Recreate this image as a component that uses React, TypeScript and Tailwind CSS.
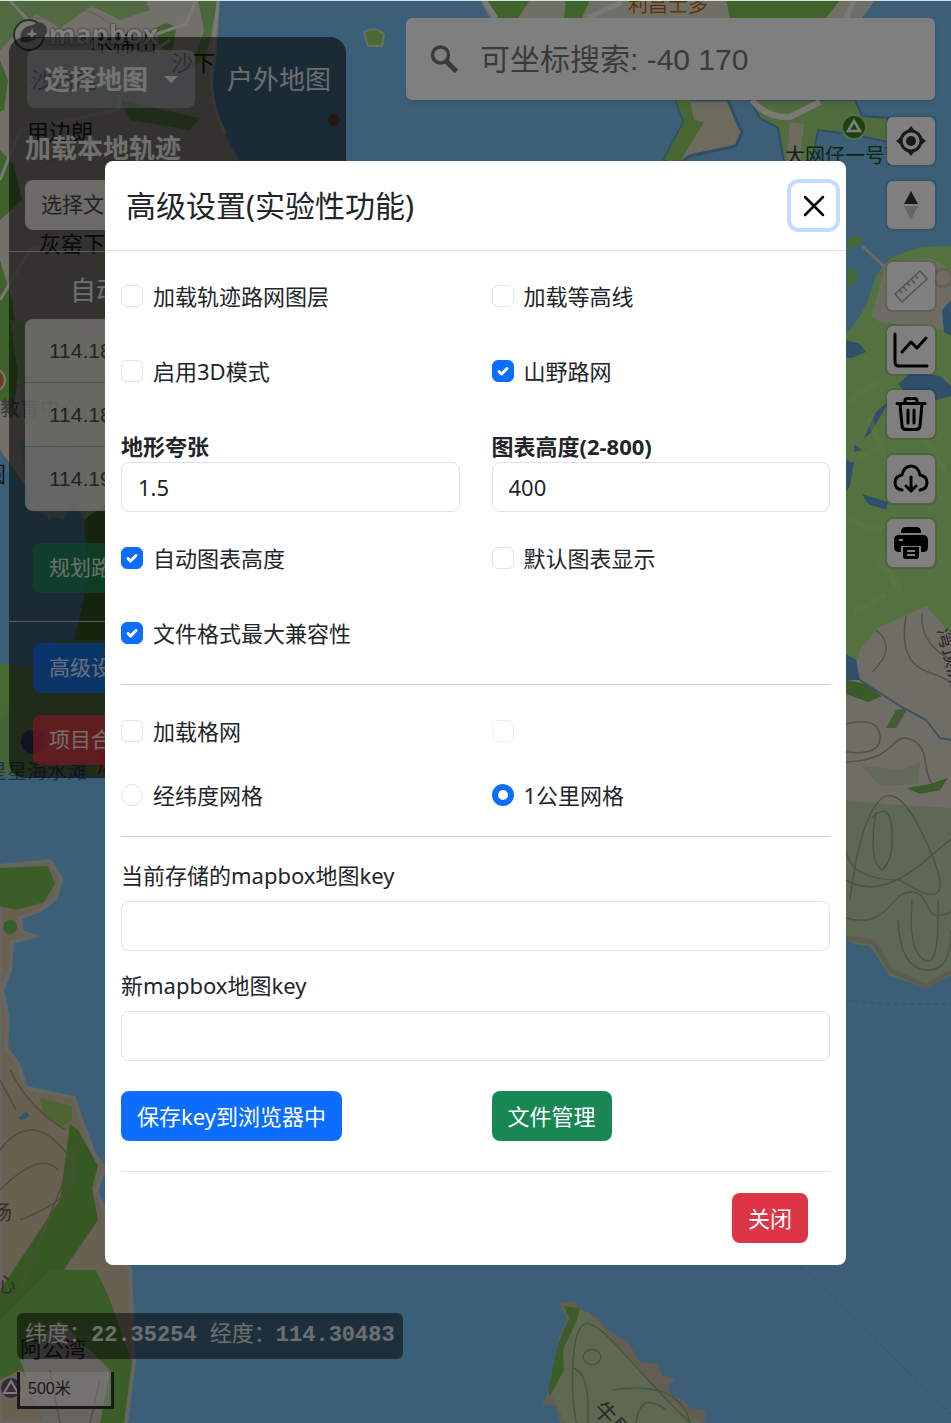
import React, { useState } from "react";

const sans = "font-['Noto_Sans','Noto_Sans_CJK_SC',sans-serif]";

interface CheckProps { id: string; label: string; defaultChecked?: boolean; disabled?: boolean }

const Check: React.FC<CheckProps> = ({ id, label, defaultChecked, disabled }) => (
    <div className="flex h-8 items-center gap-2.5">
        <span className="grid size-[22px] shrink-0 place-items-center">
            <input id={id} type="checkbox" aria-label={label || "备用选项"} defaultChecked={defaultChecked} disabled={disabled} className="peer col-start-1 row-start-1 size-[22px] appearance-none rounded-md border border-[#dee2e6] bg-white checked:border-[#0d6efd] checked:bg-[#0d6efd] disabled:opacity-50" />
            <svg viewBox="0 0 22 22" className="pointer-events-none col-start-1 row-start-1 hidden size-[22px] peer-checked:block" fill="none" stroke="#fff" strokeWidth="3" strokeLinecap="round" strokeLinejoin="round"><path d="m7 11.500 2.500 2.500L15 8.500" /></svg>
        </span>
        {label && <label htmlFor={id}>{label}</label>}
    </div>
);

interface RadioProps { id: string; label: string; checked: boolean; onChange: () => void }

const Radio: React.FC<RadioProps> = ({ id, label, checked, onChange }) => (
    <div className="flex h-8 items-center gap-2.5">
        <input id={id} type="radio" name="grid" checked={checked} onChange={onChange} className="size-[22px] shrink-0 appearance-none rounded-full border border-[#dee2e6] bg-white checked:border-[6px] checked:border-[#0d6efd]" />
        <label htmlFor={id}>{label}</label>
    </div>
);

const inputClass = "block h-[50px] w-full rounded-lg border border-[#dee2e6] bg-white px-4 text-[22px] text-[#212529]";

const MapCanvas: React.FC = () => (
    <svg aria-hidden="true" viewBox="0 0 951 1423" preserveAspectRatio="xMidYMid slice" className="absolute inset-0 h-full w-full bg-[#78bef0]">
        <rect width="951" height="1423" fill="#78bef0" />

        {/* north-west shore */}
        <path d="M0 0H220L216 60Q208 100 222 130L250 180L190 250L160 330L70 430L50 520L0 450Z" fill="#e6e0d2" />
        <path d="M0 0H146L150 10L120 20L92 6L60 28L36 14L0 50Z" fill="#a5d582" />
        <path d="M198 0H218L206 58L192 68L204 30Z" fill="#9bcf78" />
        <path d="M156 28Q170 18 176 30L172 52L160 48Z" fill="#84c25f" />
        <path d="M0 60L8 80L4 110L0 112ZM0 150L14 165L22 200L0 220ZM0 260L12 300L20 360L12 420L0 400Z" fill="#7fc456" />
        <path d="M120 100L200 118L190 130L130 120Z" fill="#8cc66a" />
        <path d="M10 320L110 340V560L60 480L25 420Z" fill="#c3e8ab" />
        <path d="M20 440L90 450L64 520L30 510Z" fill="#b9d5df" />
        <path d="M84 520L110 500V660H90L74 640L88 580Z" fill="#63a33e" />
        <path d="M60 640H190V775H0V664L30 668Z" fill="#8cc66a" />
        <path d="M0 664L10 664V706L0 720Z" fill="#8fd464" />
        <path d="M10 0L40 34L110 50L186 24L196 0M0 180L20 130L118 110L126 70L170 40M0 300L30 250L110 230" fill="none" stroke="#f6f3ea" strokeWidth="3" />
        <path d="M12 0Q30 28 60 14T120 34M20 90Q60 60 100 84T170 90M40 170Q80 130 140 170" fill="none" stroke="#c3beae" strokeWidth="1" />
        <path d="M218 0L212 60Q208 104 226 134" fill="none" stroke="#f7f5ee" strokeWidth="3" />
        <path d="M364 32Q374 26 384 34L382 46L368 46Z" fill="#95d367" stroke="#d4e3b5" strokeWidth="2" />
        <circle cx="334" cy="120" r="6" fill="#b0664d" />

        {/* north coast */}
        <path d="M480 0H875L862 18H490Z" fill="#e2decb" />
        <path d="M486 0H530L518 18H498ZM566 0H590L582 18H564ZM726 0H840L826 18H730Z" fill="#7cc852" />
        <path d="M484 0L496 18M588 18L622 2M854 0L846 18" fill="none" stroke="#f7f5ee" strokeWidth="5" />
        <path d="M676 100H728Q736 120 742 132L736 146L690 156L676 166L664 160L684 122Z" fill="#dcd5ba" stroke="#5e9dca" strokeWidth="3" />
        <path d="M676 100H690L694 120L704 122L680 162L664 160L684 122Z" fill="#92cf66" />
        <path d="M750 100H855L862 116L888 118V142L850 134L818 130L812 162H784L778 128L760 118Z" fill="#a1d779" stroke="#5e9dca" strokeWidth="2" />
        <path d="M790 122L804 124L800 162H786Z" fill="#dcd5ba" />
        <path d="M752 100Q766 118 790 117L820 102" fill="none" stroke="#f5f3ec" strokeWidth="6" />

        {/* east land */}
        <path d="M846 334L856 322L866 306L876 276L890 258L920 247L951 246V990L912 986L888 976L866 948L846 940Z" fill="#a9e47f" />
        <path d="M872 316L886 262L930 258L951 270V330L880 322Z" fill="#ded8c8" />
        <circle cx="943" cy="278" r="9" fill="none" stroke="#c5c0b3" strokeWidth="3" />
        <path d="M848 238L860 236L862 244L848 248ZM848 270H858L854 284L848 286Z" fill="#8fcf62" />
        <path d="M862 246L890 272L876 318" fill="none" stroke="#d9d6c2" strokeWidth="3" />
        <path d="M846 340L860 344L866 352L852 358H846ZM898 384L912 372L940 376L951 386V396L936 400L906 394ZM890 400L870 434L864 438L876 412ZM854 444L862 450L854 452ZM846 460L854 462L850 486L846 492ZM862 494L888 502L886 510L868 504ZM942 310L951 300V336L944 332Z" fill="#5f9fd4" />
        <path d="M850 400L876 384M852 460L880 448M870 420L890 470M846 520L880 530M920 430L944 470M880 560L900 590M856 612L884 596" fill="none" stroke="#bcea93" strokeWidth="6" strokeLinecap="round" opacity=".5" />
        <path d="M860 650L878 628L926 606L951 634V810H846V700Z" fill="#e0dacd" />
        <path d="M846 654L856 660L860 680H846Z" fill="#5f9fd4" />
        <path d="M846 680L866 684L882 696L868 702L846 694Z" fill="#74b550" />
        <path d="M886 728L896 710L908 708L896 728Z" fill="#87b96c" />
        <path d="M862 766L900 770L920 762L918 784L880 786Z" fill="#c4d3b4" />
        <path d="M846 800L880 804L920 806L951 808V980L930 982L890 966L846 930Z" fill="#bcd0aa" />
        <path d="M906 788L930 784L948 778L940 790L920 794Z" fill="#73ba4c" />
        <path d="M846 944L870 946L890 976L926 988L951 976V1060H846Z" fill="#78bef0" />
        <path d="M846 938L874 942L890 970L926 986L951 972" fill="none" stroke="#bfb5ad" strokeWidth="5" />
        <path d="M860 680L900 706L926 720L940 738L951 740" fill="none" stroke="#7e9fcc" strokeWidth="2" />
        <path d="M876 630Q898 648 872 672M906 616Q898 662 928 672T951 690M922 614Q920 644 951 660M846 724Q878 716 880 736T846 752M846 762C900 760 890 730 912 740S918 780 940 790M850 900Q860 820 880 800T930 850T900 880Q850 880 846 850M872 818Q890 800 892 830T882 870Q868 860 876 812M846 918C890 930 890 890 912 892S920 926 951 912M912 900Q908 950 924 960T938 900M846 880Q880 900 926 860T951 846M898 920Q900 968 926 970T951 930" fill="none" stroke="#a39f8c" strokeWidth="1.500" />
        <path d="M846 1000Q890 1006 951 1004M800 1266L951 1414" fill="none" stroke="#6ba7d4" strokeWidth="1" strokeDasharray="5 3" />

        {/* south-west shore */}
        <path d="M0 866L50 861L61 878L56 898L40 910L20 918L22 932L34 936L12 942L10 970L2 990L8 1020L6 1048L18 1064L26 1088L74 1098L82 1122L94 1154L104 1168L96 1192L106 1212L108 1232L130 1270L134 1362L126 1423H0Z" fill="#d0c2a4" stroke="#cfcac1" strokeWidth="4" />
        <path d="M0 868L48 866L55 884L44 902L16 910L0 906ZM10 920a7 7 0 1 0 .1 0Z" fill="#72bd50" />
        <path d="M40 1098L72 1106L72 1120L60 1128L42 1112Z" fill="#9bcb6a" />
        <path d="M18 1118L26 1112L30 1116L22 1120Z" fill="#6aabdf" />
        <path d="M70 1124L78 1130L98 1166L92 1188L98 1220L50 1290L0 1324V1290L60 1200Z" fill="#6db248" />
        <path d="M0 1320L50 1270L96 1270L110 1300L132 1362L124 1423H60L20 1370L0 1380Z" fill="#77ba50" />
        <path d="M20 1360L60 1320L110 1370L100 1423H44Z" fill="#cfcabf" />
        <path d="M10 1070Q30 1110 66 1130M0 1150Q30 1110 64 1150T20 1220M0 1190Q40 1150 58 1170M80 1140L20 1290M60 1423L50 1370M90 1423L100 1380M0 1080L16 1110" fill="none" stroke="#a2967c" strokeWidth="1.500" />

        {/* island */}
        <path d="M558 1303L574 1301L578 1308L598 1318L608 1330L628 1342L640 1362L658 1364L662 1376L676 1378L668 1386L672 1396L684 1400L690 1408L706 1411L704 1423H560L556 1406L542 1404L548 1394L558 1342L567 1318Z" fill="#c8baa9" />
        <path d="M564 1308L588 1312L632 1360L660 1394L700 1423H566L550 1392L562 1340L570 1318Z" fill="#bfd0a0" />
        <path d="M564 1306L580 1308L577 1320L563 1350L564 1370L550 1396L548 1390L558 1344L569 1318Z" fill="#7bb956" />
        <path d="M576 1423Q570 1380 574 1350T590 1324T630 1360T690 1423M584 1360a8 7 0 1 0 16-6a8 7 0 1 0-16 6M572 1368Q590 1370 588 1423M612 1390Q680 1380 690 1423M636 1423Q640 1390 666 1410" fill="none" stroke="#98a683" strokeWidth="1.500" />

        <g fill="#2b2b2b" className="font-['Noto_Sans_CJK_SC',sans-serif]" fontSize="22">
            <text x="91" y="51">木棉山</text>
            <text x="171" y="71">沙下</text>
            <text x="31" y="88">沙角尾</text>
            <text x="27" y="140">甲边朗</text>
            <text x="39" y="252">灰窑下</text>
            <text x="0" y="416" fontSize="20" fill="#7e7080">教育中心</text>
            <text x="-16" y="482">圆</text>
            <text x="-13" y="779" fontSize="20" fill="#3e6289">星星海水滩</text>
            <text x="97" y="772" fill="#cf1830">风</text>
            <text x="785" y="163" fontSize="20" fill="#244b22">大网仔一号营地</text>
            <text x="628" y="12" fontSize="20" fill="#bb671c">利昌士多</text>
            <text x="-8" y="1220" fontSize="20" fill="#665e50">场</text>
            <text x="-4" y="1292" fontSize="20" fill="#665e50">心</text>
            <text x="20" y="1357">阿公湾</text>
            <text x="592" y="1410" transform="rotate(48 592 1410)" fill="#555">牛尾洲</text>
            <text x="937" y="630" transform="rotate(75 937 630)" fontSize="20" fill="#555">湾顶洲</text>
        </g>
        <circle cx="-6" cy="380" r="11" fill="#d77843" stroke="#eee" strokeWidth="2" />
        <circle cx="33" cy="742" r="12" fill="#3e5c98" />
        <circle cx="854" cy="127" r="12" fill="#33861b" stroke="#b5d894" strokeWidth="2" />
        <path d="M848 131L854 121L860 131Z" fill="none" stroke="#fff" strokeWidth="2.500" />
        <circle cx="11" cy="1388" r="11" fill="#70576f" stroke="#cfc4cc" strokeWidth="2" />
        <path d="M4 1393L11 1381L18 1393Z" fill="none" stroke="#fff" strokeWidth="2" />

        {/* wordmark */}
        <circle cx="29" cy="35" r="15" fill="#eee" stroke="#5d5d55" strokeWidth="2" />
        <path d="M21 42Q18 27 33 25A8 8 0 1 1 37 38Q31 43 21 42Z" fill="#777" />
        <path d="m32 28 1.500 4.500L38 34l-4.500 1.500L32 40l-1.500-4.500L26 34l4.500-1.500Z" fill="#eee" />
        <text x="49" y="44" fill="#fff" fontSize="27" fontWeight="700" className="font-['Open_Sans',sans-serif] drop-shadow-[0_0_1px_#333]">mapbox</text>
    </svg>
);

const SidePanel: React.FC = () => (
    <aside className="relative mt-[37px] w-[337px] rounded-2xl bg-black/55 pb-[13px] text-[21px] text-white/80">
        <div className="flex items-center gap-8 pt-[13px] pl-[18px] text-[26px] whitespace-nowrap">
            <button type="button" className="flex h-[58px] shrink-0 items-center gap-4 rounded-lg bg-[#b0bac4]/45 px-[17px] font-bold">
                选择地图
                <span className="border-x-[7px] border-t-[7px] border-x-transparent border-t-white/80" />
            </button>
            <span>户外地图</span>
        </div>
        <h2 className="mt-5 px-4 text-[26px] leading-10 font-bold">加载本地轨迹</h2>
        <button type="button" className="mx-4 mt-3 flex h-[50px] w-[305px] items-center rounded-lg bg-[#f5f3ee]/80 px-4 text-[#444]">选择文件</button>
        <hr className="mt-[21px] border-[#bbb]" />
        <h2 className="mt-[18px] pl-[61px] text-[26px] leading-10">自动</h2>
        <ul className="mx-4 mt-[9px] divide-y divide-[#a5aca0] rounded-lg bg-[#f5f3ee]/75 text-[#444]">
            {["114.18", "114.18", "114.19"].map((value, i) => (
                <li key={i} className="flex h-16 items-center px-6 font-['Liberation_Sans','Noto_Sans_CJK_SC',sans-serif]">{value}</li>
            ))}
        </ul>
        <div className="px-6 pt-[32px]">
            <button type="button" className="h-[50px] rounded-lg bg-[#198754]/80 px-4">规划路线</button>
        </div>
        <hr className="mt-[28px] border-[#bbb]" />
        <div className="flex flex-col items-start gap-[22px] px-6 pt-[21px]">
            <button type="button" className="h-[50px] rounded-lg bg-[#0d6efd]/80 px-4">高级设置</button>
            <button type="button" className="h-[50px] rounded-lg bg-[#dc3545]/80 px-4">项目合集</button>
        </div>
    </aside>
);

const tools: { label: string; className: string; icon: React.ReactNode }[] = [
    {
        label: "定位", className: "",
        icon: (
            <svg viewBox="0 0 32 32" className="size-8" fill="none" stroke="#333" strokeWidth="3">
                <circle cx="16" cy="16" r="10" /><circle cx="16" cy="16" r="5" fill="#333" stroke="none" />
                <path d="m16 1 4 5h-8ZM16 31l4-5h-8ZM1 16l5-4v8ZM31 16l-5-4v8Z" fill="#333" stroke="none" />
            </svg>
        ),
    },
    {
        label: "指北", className: "mt-4",
        icon: <svg viewBox="0 0 36 36" className="size-9"><path d="M11 17 18 4l7 13Z" fill="#333" /><path d="M11 19 18 33l7-14Z" fill="#ccc" /></svg>,
    },
    {
        label: "测距", className: "mt-[33px]",
        icon: (
            <svg viewBox="0 0 36 36" className="size-9" fill="none" stroke="#a4a4a8" strokeWidth="1.500">
                <path d="M2 26 27 3l7 8L9 34ZM6 22l3 3M10 18.500l4 4.500M14 15l3 3M18 11l4 4.500M22 7.500l3 3" />
            </svg>
        ),
    },
    {
        label: "图表", className: "mt-4",
        icon: (
            <svg viewBox="0 0 36 36" className="size-9" fill="none" stroke="#000" strokeWidth="3" strokeLinecap="round" strokeLinejoin="round">
                <path d="M2 2v28q0 4 4 4h28M9 20l9-10 6 6 9-10" />
            </svg>
        ),
    },
    {
        label: "删除", className: "mt-4",
        icon: (
            <svg viewBox="0 0 36 36" className="size-9" fill="none" stroke="#000" strokeWidth="3" strokeLinecap="round" strokeLinejoin="round">
                <path d="M4 7.500h28M12 7V5q0-2.500 2.500-2.500h7Q24 2.500 24 5v2M7 8l2 22q.3 3.500 4 3.500h10q3.700 0 4-3.500l2-22M15 14v13M21 14v13" />
            </svg>
        ),
    },
    {
        label: "下载", className: "mt-[17px]",
        icon: (
            <svg viewBox="0 0 36 36" className="size-9" fill="none" stroke="#000" strokeWidth="3" strokeLinecap="round" strokeLinejoin="round">
                <path d="M9 29q-7-1-7-7.500 0-6 7-7.500 2-9 9-9t9 9q7 1.500 7 7.500 0 6.500-7 7.500M18 16v14M13 25l5 5 5-5" />
            </svg>
        ),
    },
    {
        label: "打印", className: "mt-4",
        icon: (
            <svg viewBox="0 0 36 36" className="size-9">
                <path d="M8 7q0-5 5-5h10q5 0 5 5v1H8Z" />
                <path d="M6 10h24q5 0 5 5v7q0 5-5 5h-2v-6H8v6H6q-5 0-5-5v-7q0-5 5-5Zm0 4v2h4v-2Z" fillRule="evenodd" />
                <path d="M10 22h16v9q0 3-3 3H13q-3 0-3-3Zm4 3v2h8v-2Zm0 4v2h8v-2Z" fillRule="evenodd" />
            </svg>
        ),
    },
];

const SettingsModal: React.FC = () => {
    const [grid, setGrid] = useState("km");
    return (
        <div role="dialog" aria-modal="true" aria-labelledby="modal-title" className="mx-auto w-full max-w-[741px] rounded-lg bg-white text-[22px] leading-8 text-[#212529]">
            <header className="flex h-[90px] items-center justify-between border-b border-[#dee2e6] pr-2.5 pl-[21px]">
                <h1 id="modal-title" className="text-[30px] leading-10">高级设置(实验性功能)</h1>
                <button type="button" aria-label="关闭窗口" className="grid size-[45px] place-items-center rounded-lg ring-4 ring-[#c2dbfe]">
                    <svg viewBox="0 0 22 22" className="size-[22px]" stroke="#000" strokeWidth="2.500" strokeLinecap="round"><path d="m2 2 18 18M20 2 2 20" /></svg>
                </button>
            </header>
            <div className="px-4 pb-[22px]">
                <div className="grid grid-cols-2 gap-x-8 gap-y-[43px] pt-[29px]">
                    <Check id="track" label="加载轨迹路网图层" />
                    <Check id="contour" label="加载等高线" />
                    <Check id="terrain" label="启用3D模式" />
                    <Check id="trails" label="山野路网" defaultChecked />
                    <div>
                        <label htmlFor="exaggeration" className="block font-bold">地形夸张</label>
                        <input id="exaggeration" type="text" defaultValue="1.5" className={inputClass} />
                    </div>
                    <div>
                        <label htmlFor="height" className="block font-bold">图表高度(2-800)</label>
                        <input id="height" type="text" defaultValue="400" className={inputClass} />
                    </div>
                </div>
                <div className="mt-[30px] grid grid-cols-2 gap-x-8 gap-y-[43px]">
                    <Check id="auto-height" label="自动图表高度" defaultChecked />
                    <Check id="show-chart" label="默认图表显示" />
                    <Check id="compat" label="文件格式最大兼容性" defaultChecked />
                </div>
                <hr className="mt-[35px] border-[#c8c9ca]" />
                <div className="mt-[30px] grid grid-cols-2 gap-8">
                    <Check id="load-grid" label="加载格网" />
                    <Check id="spare" label="" disabled />
                    <Radio id="grid-deg" label="经纬度网格" checked={grid === "deg"} onChange={() => setGrid("deg")} />
                    <Radio id="grid-km" label="1公里网格" checked={grid === "km"} onChange={() => setGrid("km")} />
                </div>
                <hr className="mt-[25px] border-[#c8c9ca]" />
                <label htmlFor="key" className="mt-[22px] mb-2.5 block">当前存储的mapbox地图key</label>
                <input id="key" type="text" className={inputClass} />
                <label htmlFor="new-key" className="mt-[18px] mb-2.5 block">新mapbox地图key</label>
                <input id="new-key" type="text" className={inputClass} />
                <div className="mt-[30px] grid grid-cols-2 justify-items-start gap-8">
                    <button type="button" className="h-[50px] rounded-lg bg-[#0d6efd] px-4 text-white">保存key到浏览器中</button>
                    <button type="button" className="h-[50px] rounded-lg bg-[#198754] px-4 text-white">文件管理</button>
                </div>
                <hr className="mt-[30px] border-[#dee2e6]" />
                <div className="mt-[21px] flex justify-end pr-[22px]">
                    <button type="button" className="h-[50px] rounded-lg bg-[#dc3545] px-4 text-white">关闭</button>
                </div>
            </div>
        </div>
    );
};

const App: React.FC = () => (
    <div className={`relative flex min-h-screen flex-col justify-between overflow-hidden ${sans}`}>
        <MapCanvas />
        <main className="flex items-start justify-between gap-[60px] pr-4 pl-[9px]">
            <SidePanel />
            <div className="relative flex min-w-0 flex-1 flex-col items-end pt-[18px]">
                <div className="flex h-[82px] w-full items-center gap-[22px] rounded-md bg-white px-6 shadow-md">
                    <svg viewBox="0 0 28 28" className="size-7 shrink-0" fill="none" stroke="#757575" strokeWidth="3.500"><circle cx="10.500" cy="10" r="8" /><path d="m16 16 10.500 10.500" strokeWidth="5" /></svg>
                    <input type="text" aria-label="搜索" placeholder="可坐标搜索: -40 170" className="min-w-0 flex-1 font-['Liberation_Sans','Noto_Sans_CJK_SC',sans-serif] text-[30px] placeholder:text-[#757575]" />
                </div>
                <div className="flex flex-col pt-[17px]">
                    {tools.map((tool) => (
                        <button key={tool.label} type="button" aria-label={tool.label} className={`grid size-12 place-items-center rounded-md bg-white shadow-[0_0_0_2px_rgba(0,0,0,0.1)] ${tool.className}`}>{tool.icon}</button>
                    ))}
                </div>
            </div>
        </main>
        <footer className="relative flex flex-col items-start gap-[13px] pb-3.5 pl-[17px]">
            <div className="rounded-md bg-black/50 px-2 font-['Liberation_Mono','Noto_Sans_CJK_SC',monospace] text-[22px] leading-[46px] text-white/80">纬度：<b>22.35254</b> 经度：<b>114.30483</b></div>
            <div className="h-[37px] w-[97px] border-[3px] border-t-0 border-[#333] bg-white/50 px-2 font-['Liberation_Sans','Noto_Sans_CJK_SC',sans-serif] text-[16px] leading-[34px] text-[#333]">500米</div>
        </footer>
        <div className="fixed inset-0 overflow-y-auto border-t border-[#cfe3df] bg-black/50 px-4 pt-40">
            <SettingsModal />
        </div>
    </div>
);

export default App;
